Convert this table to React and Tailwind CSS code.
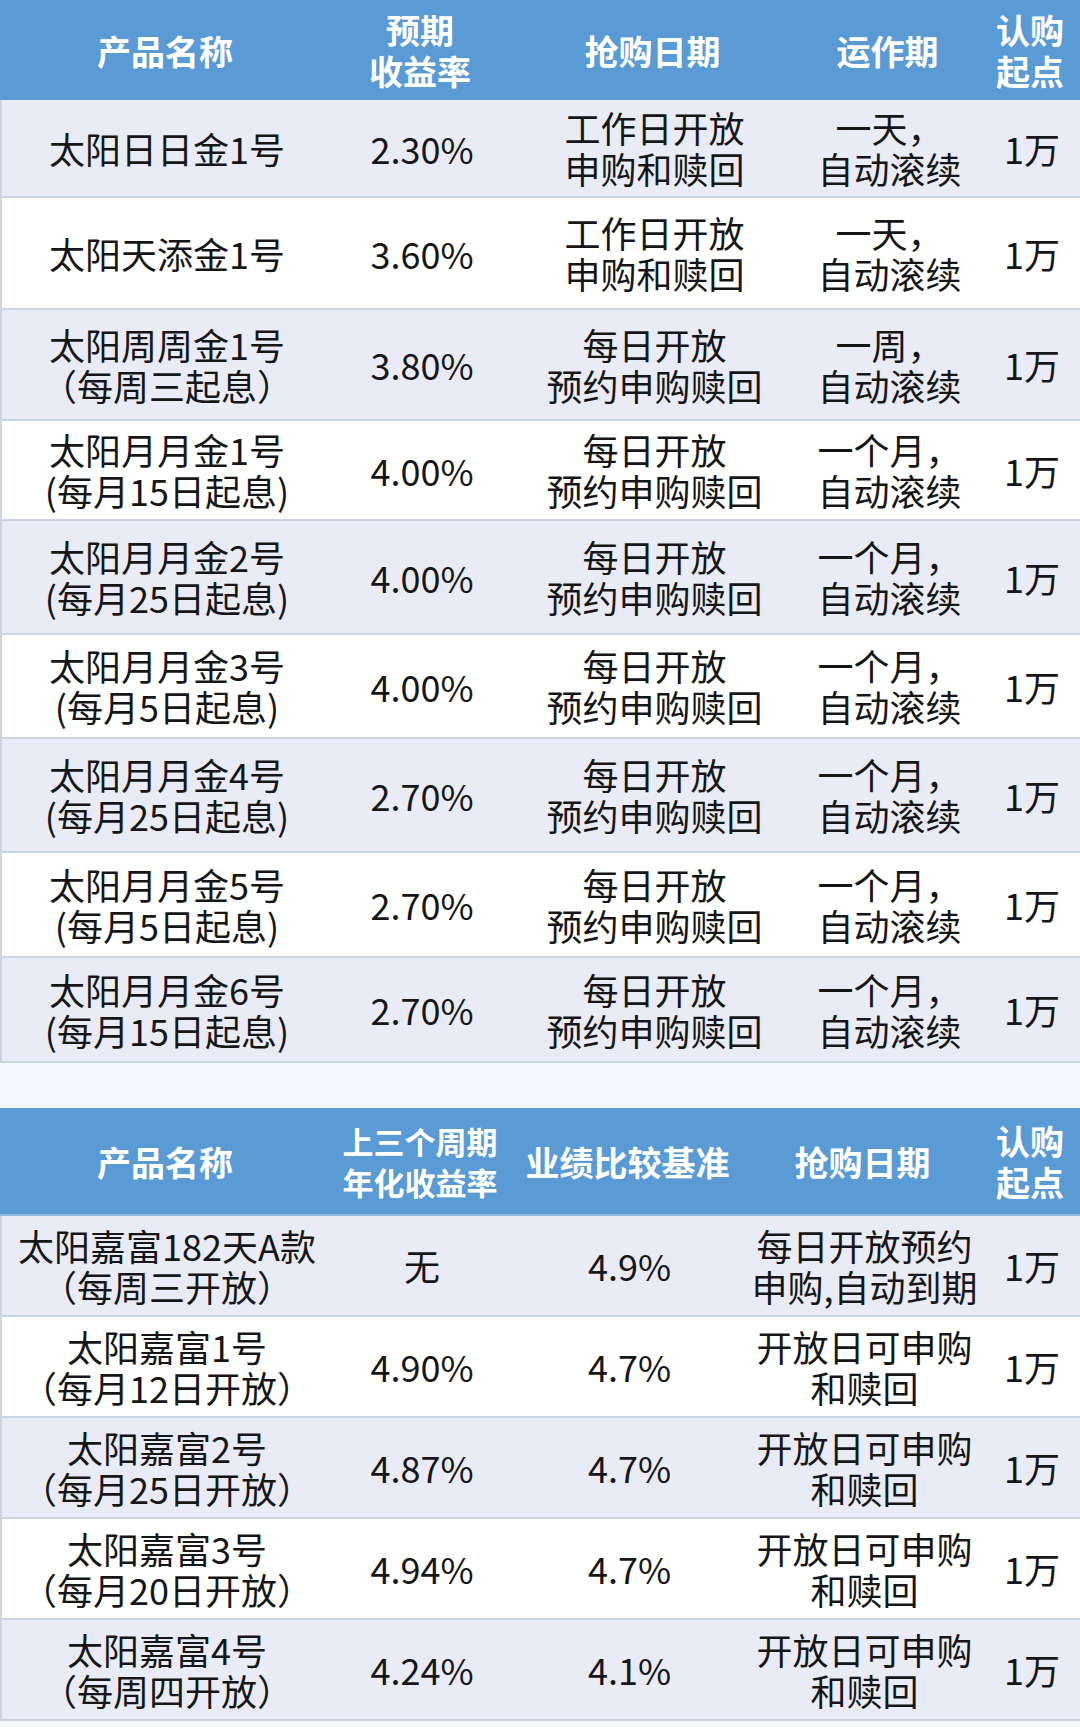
import React from "react";

const font = { fontFamily: '"Noto Sans CJK SC", "Noto Sans", sans-serif' };

const table1 = [
  { h: "h-[98px]", bg: "bg-[#e9ecf6]", c: [["太阳日日金1号"], ["2.30%"], ["工作日开放", "申购和赎回"], ["一天，", "自动滚续"], ["1万"]] },
  { h: "h-[112px]", bg: "bg-white", c: [["太阳天添金1号"], ["3.60%"], ["工作日开放", "申购和赎回"], ["一天，", "自动滚续"], ["1万"]] },
  { h: "h-[111px]", bg: "bg-[#e9ecf6]", c: [["太阳周周金1号", "（每周三起息）"], ["3.80%"], ["每日开放", "预约申购赎回"], ["一周，", "自动滚续"], ["1万"]] },
  { h: "h-[100px]", bg: "bg-white", c: [["太阳月月金1号", "(每月15日起息)"], ["4.00%"], ["每日开放", "预约申购赎回"], ["一个月，", "自动滚续"], ["1万"]] },
  { h: "h-[114px]", bg: "bg-[#e9ecf6]", c: [["太阳月月金2号", "(每月25日起息)"], ["4.00%"], ["每日开放", "预约申购赎回"], ["一个月，", "自动滚续"], ["1万"]] },
  { h: "h-[104px]", bg: "bg-white", c: [["太阳月月金3号", "(每月5日起息)"], ["4.00%"], ["每日开放", "预约申购赎回"], ["一个月，", "自动滚续"], ["1万"]] },
  { h: "h-[114px]", bg: "bg-[#e9ecf6]", c: [["太阳月月金4号", "(每月25日起息)"], ["2.70%"], ["每日开放", "预约申购赎回"], ["一个月，", "自动滚续"], ["1万"]] },
  { h: "h-[105px]", bg: "bg-white", c: [["太阳月月金5号", "(每月5日起息)"], ["2.70%"], ["每日开放", "预约申购赎回"], ["一个月，", "自动滚续"], ["1万"]] },
  { h: "h-[105px]", bg: "bg-[#e9ecf6]", c: [["太阳月月金6号", "(每月15日起息)"], ["2.70%"], ["每日开放", "预约申购赎回"], ["一个月，", "自动滚续"], ["1万"]] },
];

const table2 = [
  { bg: "bg-[#e9ecf6]", c: [["太阳嘉富182天A款", "（每周三开放）"], ["无"], ["4.9%"], ["每日开放预约", "申购,自动到期"], ["1万"]] },
  { bg: "bg-white", c: [["太阳嘉富1号", "（每月12日开放）"], ["4.90%"], ["4.7%"], ["开放日可申购", "和赎回"], ["1万"]] },
  { bg: "bg-[#e9ecf6]", c: [["太阳嘉富2号", "（每月25日开放）"], ["4.87%"], ["4.7%"], ["开放日可申购", "和赎回"], ["1万"]] },
  { bg: "bg-white", c: [["太阳嘉富3号", "（每月20日开放）"], ["4.94%"], ["4.7%"], ["开放日可申购", "和赎回"], ["1万"]] },
  { bg: "bg-[#e9ecf6]", c: [["太阳嘉富4号", "（每周四开放）"], ["4.24%"], ["4.1%"], ["开放日可申购", "和赎回"], ["1万"]] },
];

const Cell = ({ lines }) => (
  <div className="flex flex-col items-center justify-center text-center text-[36px] leading-[41px] text-[#161616] whitespace-nowrap">
    {lines.map((l, i) => (
      <span key={i}>{l}</span>
    ))}
  </div>
);

const Head = ({ lines, size = "text-[34px]" }) => (
  <div className={`flex flex-col items-center justify-center text-center ${size} leading-[41px] font-bold text-white whitespace-nowrap`}>
    {lines.map((l, i) => (
      <span key={i}>{l}</span>
    ))}
  </div>
);

const App = () => {
  return (
    <div className="w-[1080px] h-[1727px] bg-[#f4f9fd] overflow-hidden" style={font}>
      {/* first table */}
      <div className="grid grid-cols-[330px_180px_285px_185px_100px] h-[100px] bg-[#5b9bd5]">
        <Head lines={["产品名称"]} />
        <Head lines={["预期", "收益率"]} />
        <Head lines={["抢购日期"]} />
        <Head lines={["运作期"]} />
        <Head lines={["认购", "起点"]} />
      </div>
      {table1.map((row, i) => (
        <div key={i} className={`grid grid-cols-[330px_180px_285px_185px_100px] ${row.h} ${row.bg} border-b-2 border-l-2 border-[#cbd5e6]`}>
          {row.c.map((lines, j) => (
            <Cell key={j} lines={lines} />
          ))}
        </div>
      ))}

      <div className="h-[45px]" />

      {/* second table */}
      <div className="grid grid-cols-[330px_180px_235px_235px_100px] h-[108px] bg-[#5b9bd5] border-b-2 border-[#8fbbe4]">
        <Head lines={["产品名称"]} />
        <Head lines={["上三个周期", "年化收益率"]} size="text-[31px]" />
        <Head lines={["业绩比较基准"]} />
        <Head lines={["抢购日期"]} />
        <Head lines={["认购", "起点"]} />
      </div>
      {table2.map((row, i) => (
        <div key={i} className={`grid grid-cols-[330px_180px_235px_235px_100px] h-[101px] ${row.bg} border-b-2 border-l-2 border-[#cbd5e6]`}>
          {row.c.map((lines, j) => (
            <Cell key={j} lines={lines} />
          ))}
        </div>
      ))}
    </div>
  );
};

export default App;
